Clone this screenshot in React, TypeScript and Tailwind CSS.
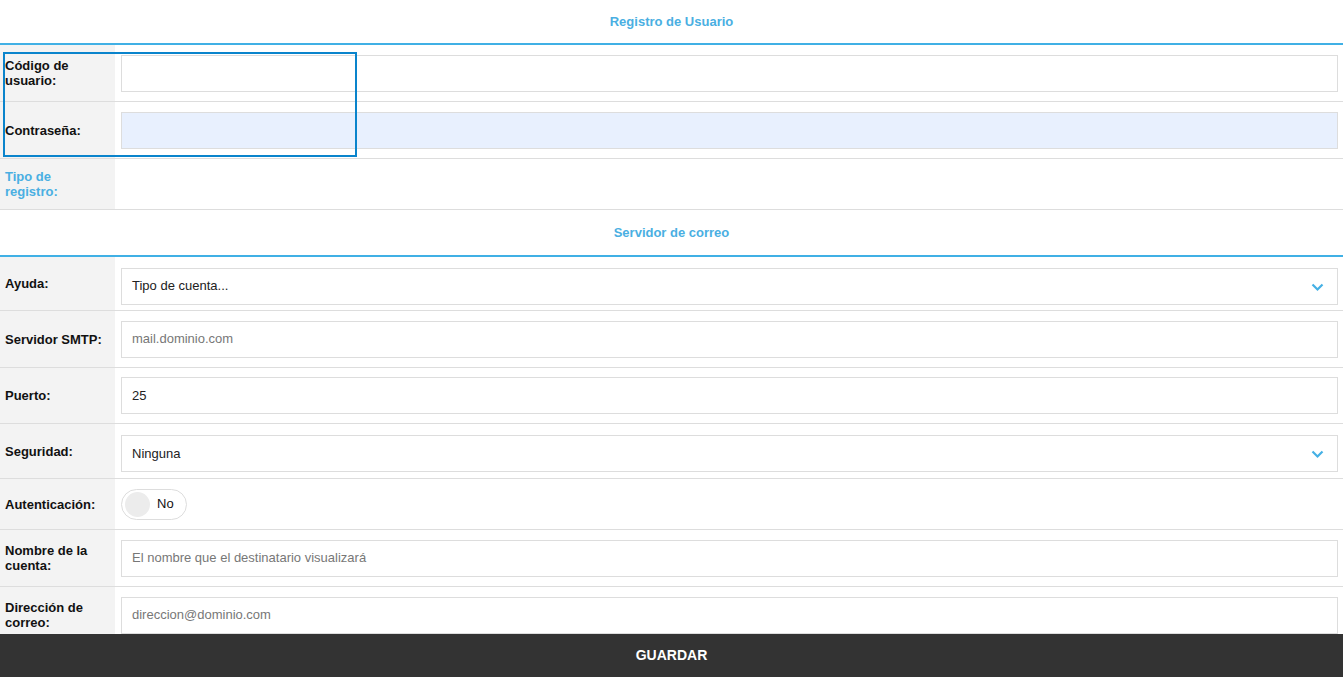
type Field = {
  label: string;
  kind: "input" | "select" | "toggle" | "none";
  value?: string;
  placeholder?: string;
  h: string;
  autofill?: boolean;
  muted?: boolean;
};

const userFields: Field[] = [
  { label: "Código de usuario:", kind: "input", h: "h-[57px]" },
  { label: "Contraseña:", kind: "input", h: "h-[57px]", autofill: true },
  { label: "Tipo de registro:", kind: "none", h: "h-[51px]", muted: true },
];

const mailFields: Field[] = [
  { label: "Ayuda:", kind: "select", value: "Tipo de cuenta...", h: "h-[54px]" },
  { label: "Servidor SMTP:", kind: "input", placeholder: "mail.dominio.com", h: "h-[57px]" },
  { label: "Puerto:", kind: "input", value: "25", h: "h-[56px]" },
  { label: "Seguridad:", kind: "select", value: "Ninguna", h: "h-[55px]" },
  { label: "Autenticación:", kind: "toggle", h: "h-[51px]" },
  { label: "Nombre de la cuenta:", kind: "input", placeholder: "El nombre que el destinatario visualizará", h: "h-[57px]" },
  { label: "Dirección de correo:", kind: "input", placeholder: "direccion@dominio.com", h: "h-[57px]" },
];

function SectionHeader({ title, h }: { title: string; h: string }) {
  return (
    <div className={`flex items-center justify-center border-b-2 border-[#40b0e5] text-[13px] font-bold text-[#4aafe2] ${h}`}>
      {title}
    </div>
  );
}

function Chevron() {
  return (
    <svg width="13" height="9" viewBox="0 0 13 9" fill="none" className="mr-[3px] mt-[2px]">
      <polyline points="1.5,1.5 6.5,6.5 11.5,1.5" stroke="#45b0e5" strokeWidth="2.2" />
    </svg>
  );
}

function Control({ field }: { field: Field }) {
  if (field.kind === "none") return null;
  if (field.kind === "toggle") {
    return (
      <div className="flex h-[31px] w-[66px] items-center gap-[7px] rounded-full border border-[#dddddd] bg-white pl-[3px]">
        <div className="h-[25px] w-[25px] rounded-full bg-[#ececec]" />
        <span className="text-[13px] text-[#111]">No</span>
      </div>
    );
  }
  const base = `flex h-[37px] flex-1 items-center border border-[#dddddd] px-[10px] text-[13px] ${
    field.autofill ? "bg-[#e8f0fe]" : "bg-white"
  }`;
  if (field.kind === "select") {
    return (
      <div className={`${base} mt-[5px] justify-between`}>
        <span className="text-[#222]">{field.value}</span>
        <Chevron />
      </div>
    );
  }
  return (
    <div className={base}>
      {field.value ? (
        <span className="text-[#222]">{field.value}</span>
      ) : (
        <span className="text-[#777]">{field.placeholder}</span>
      )}
    </div>
  );
}

function Row({ field }: { field: Field }) {
  return (
    <div className={`flex border-b border-[#dddddd] ${field.h}`}>
      <div
        className={`flex w-[115px] shrink-0 items-center bg-[#f3f3f3] pl-[5px] pr-2 text-[13px] font-bold leading-[15px] ${
          field.muted ? "text-[#4aafe2]" : "text-[#111]"
        }`}
      >
        {field.label}
      </div>
      <div className="flex flex-1 items-center pl-[6px] pr-[5px]">
        <Control field={field} />
      </div>
    </div>
  );
}

export default function App() {
  return (
    <div className="relative flex h-[677px] flex-col overflow-hidden bg-white font-['Liberation_Sans',Arial,sans-serif]">
      <div className="flex-1 overflow-hidden">
        <SectionHeader title="Registro de Usuario" h="h-[45px]" />
        {userFields.map((f) => (
          <Row key={f.label} field={f} />
        ))}
        <SectionHeader title="Servidor de correo" h="h-[47px]" />
        {mailFields.map((f) => (
          <Row key={f.label} field={f} />
        ))}
      </div>
      <button className="flex h-[43px] shrink-0 items-center justify-center bg-[#333333] text-[14px] font-bold text-white">
        GUARDAR
      </button>
      <div className="pointer-events-none absolute left-[3px] top-[52px] h-[105px] w-[354px] border-2 border-[#0a84cc]" />
    </div>
  );
}
